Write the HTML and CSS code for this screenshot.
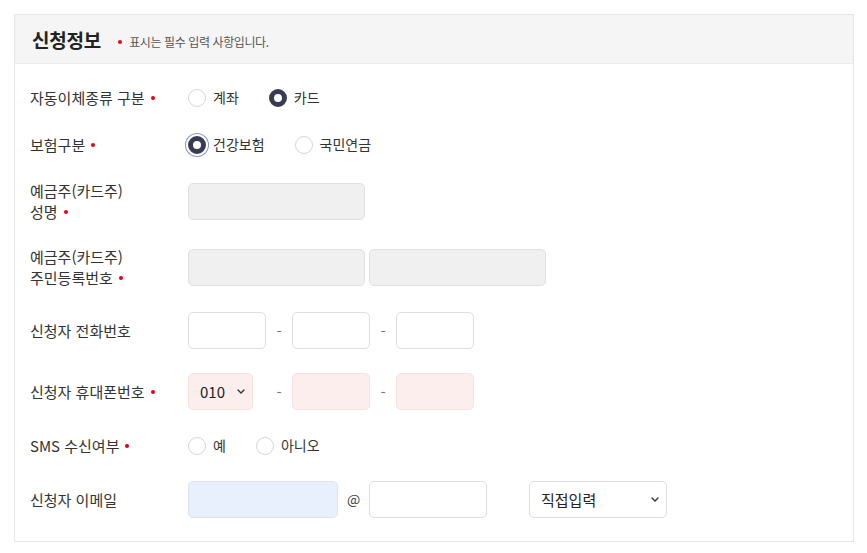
FILE: index.html
```html
<!DOCTYPE html>
<html lang="ko">
<head>
<meta charset="utf-8">
<title>신청정보</title>
<link rel="stylesheet" href="styles.css">
</head>
<body>
<section class="box">
  <header class="box-head">
    <h2 class="title">신청정보</h2>
    <p class="note"><span class="req"></span>표시는 필수 입력 사항입니다.</p>
  </header>
  <div class="box-body">
    <div class="row">
      <div class="label">자동이체종류 구분<span class="req"></span></div>
      <div class="field">
        <label class="opt"><input type="radio" name="kind" class="radio"><span>계좌</span></label>
        <label class="opt"><input type="radio" name="kind" class="radio" checked><span>카드</span></label>
      </div>
    </div>
    <div class="row">
      <div class="label">보험구분<span class="req"></span></div>
      <div class="field">
        <label class="opt"><input type="radio" name="ins" class="radio focus" checked><span>건강보험</span></label>
        <label class="opt"><input type="radio" name="ins" class="radio"><span>국민연금</span></label>
      </div>
    </div>
    <div class="row">
      <div class="label two">예금주(카드주)<br>성명<span class="req"></span></div>
      <div class="field">
        <input type="text" class="inp w177 dis" disabled>
      </div>
    </div>
    <div class="row">
      <div class="label two">예금주(카드주)<br>주민등록번호<span class="req"></span></div>
      <div class="field gap4">
        <input type="text" class="inp w177 dis" disabled>
        <input type="text" class="inp w177 dis" disabled>
      </div>
    </div>
    <div class="row">
      <div class="label">신청자 전화번호</div>
      <div class="field">
        <div class="slot"><input type="text" class="inp w77"></div>
        <span class="dash">-</span>
        <div class="slot"><input type="text" class="inp w77"></div>
        <span class="dash">-</span>
        <div class="slot"><input type="text" class="inp w77"></div>
      </div>
    </div>
    <div class="row">
      <div class="label">신청자 휴대폰번호<span class="req"></span></div>
      <div class="field">
        <div class="slot">
          <div class="selwrap w64">
            <select class="sel err"><option>010</option><option>011</option><option>016</option></select>
            <svg class="chev" width="8" height="5" viewBox="0 0 8 5"><path d="M1 1 L4 4 L7 1" fill="none" stroke="#333" stroke-width="1.4" stroke-linecap="round" stroke-linejoin="round"/></svg>
          </div>
        </div>
        <span class="dash">-</span>
        <div class="slot"><input type="text" class="inp w77 err"></div>
        <span class="dash">-</span>
        <div class="slot"><input type="text" class="inp w77 err"></div>
      </div>
    </div>
    <div class="row">
      <div class="label">SMS 수신여부<span class="req"></span></div>
      <div class="field">
        <label class="opt"><input type="radio" name="sms" class="radio"><span>예</span></label>
        <label class="opt"><input type="radio" name="sms" class="radio"><span>아니오</span></label>
      </div>
    </div>
    <div class="row">
      <div class="label">신청자 이메일</div>
      <div class="field">
        <input type="text" class="inp w149 auto">
        <span class="at">@</span>
        <input type="text" class="inp w117">
        <div class="selwrap w137 ml43">
          <select class="sel"><option>직접입력</option><option>naver.com</option><option>gmail.com</option></select>
          <svg class="chev" width="8" height="5" viewBox="0 0 8 5"><path d="M1 1 L4 4 L7 1" fill="none" stroke="#333" stroke-width="1.4" stroke-linecap="round" stroke-linejoin="round"/></svg>
        </div>
      </div>
    </div>
  </div>
</section>
</body>
</html>
```

FILE: styles.css
```css
html, body {
  margin: 0;
  padding: 0;
  background: #ffffff;
}
body {
  font-family: "Noto Sans CJK KR", "Noto Sans", "Liberation Sans", sans-serif;
  color: #333333;
  font-size: 14px;
}
.box {
  width: 840px;
  box-sizing: border-box;
  margin: 14px 0 0 14px;
  border: 1px solid #e6e6e6;
}
.box-head {
  height: 48px;
  background: #f5f5f5;
  border-bottom: 1px solid #ebebeb;
  display: flex;
  align-items: center;
  padding-left: 17px;
}
.title {
  margin: 0;
  font-size: 19px;
  font-weight: 700;
  color: #222222;
  letter-spacing: -0.2px;
}
.note {
  margin: 5px 0 0 17px;
  font-size: 12px;
  letter-spacing: -0.4px;
  color: #555555;
  display: flex;
  align-items: center;
}
.note .req {
  margin: 0 7px 0 0;
  top: 0;
}
.req {
  display: inline-block;
  width: 4px;
  height: 4px;
  border-radius: 50%;
  background: #e60012;
  margin-left: 6px;
  vertical-align: middle;
  position: relative;
  top: -2px;
}
.box-body {
  padding: 10px 0 11px 15px;
}
.row {
  display: flex;
  align-items: center;
  padding: 12px 0;
  min-height: 23px;
}
.label {
  width: 158px;
  flex: none;
  font-size: 15px;
  line-height: 21px;
  color: #333333;
}
.field {
  display: flex;
  align-items: center;
  line-height: 23px;
}
.gap4 {
  gap: 4px;
}
.opt {
  display: flex;
  align-items: center;
  margin-right: 30px;
  cursor: pointer;
  font-size: 14px;
}
.opt span {
  margin-left: 7px;
}
.radio {
  -webkit-appearance: none;
  appearance: none;
  margin: 0;
  width: 18px;
  height: 18px;
  border-radius: 50%;
  border: 1px solid #d6d6d6;
  background: #ffffff;
  box-sizing: border-box;
}
.radio:checked {
  border: 5px solid #383c52;
  background: #ffffff;
}
.radio.focus {
  box-shadow: 0 0 0 2px #ffffff, 0 0 0 3px #8a93c9;
}
.inp, .sel {
  height: 37px;
  box-sizing: border-box;
  border: 1px solid #dedede;
  border-radius: 5px;
  background: #ffffff;
  font-family: inherit;
  font-size: 15px;
  color: #222222;
  margin: 0;
  padding: 0 10px;
}
.sel {
  -webkit-appearance: none;
  appearance: none;
  width: 100%;
  padding-left: 11px;
  padding-right: 20px;
}
.selwrap {
  position: relative;
  display: flex;
}
.chev {
  position: absolute;
  right: 8px;
  top: 16px;
  pointer-events: none;
}
.dis {
  background: #f0f0f0;
  border-color: #e0e0e0;
}
.err {
  background: #fdeeee;
  border-color: #f7e2e2;
}
.auto {
  background: #e8f0fe;
  border-color: #dde3ee;
}
.w177 { width: 177px; }
.w77 { width: 78px; }
.w64 { width: 65px; }
.w149 { width: 150px; }
.w117 { width: 118px; }
.w137 { width: 138px; }
.ml43 { margin-left: 42px; }
.slot {
  width: 78px;
  display: flex;
}
.dash {
  width: 26px;
  text-align: center;
  color: #777777;
  font-size: 15px;
}
.at {
  width: 31px;
  text-align: center;
  color: #444444;
  font-size: 14px;
}
```
